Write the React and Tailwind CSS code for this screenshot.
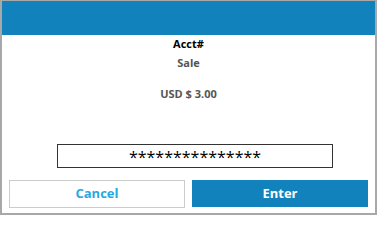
import React from "react";

export default function App() {
    return (
        <div
            className="w-[377px] h-[215px] bg-white border-t border-l-2 border-r-2 border-b-2 border-[#a8a8a8] flex flex-col"
            style={{ fontFamily: '"Open Sans", "Noto Sans", sans-serif' }}
        >
            {/* header bar */}
            <div className="h-[34px] bg-[#1282bd] shrink-0" />

            <div className="flex flex-col items-center font-bold text-[11px] leading-[15px]">
                <div className="mt-[1px] text-black">Acct#</div>
                <div className="mt-[4px] text-[#555555]">Sale</div>
                <div className="mt-[16px] text-[#555555]">USD $ 3.00</div>
            </div>

            {/* masked account input */}
            <div className="mt-[43px] ml-[55px] w-[276px] h-[24px] border border-[#333333] flex items-start justify-center">
                <span className="text-[16px] leading-[24px] text-black">***************</span>
            </div>

            <div className="mt-[12px] px-[7px] flex gap-[7px]">
                <button className="w-[176px] h-[28px] bg-white border border-[#cccccc] text-[#29a8e0] font-bold text-[13px]">
                    Cancel
                </button>
                <button className="w-[176px] h-[27px] bg-[#1282bd] text-white font-bold text-[13px]">
                    Enter
                </button>
            </div>
        </div>
    );
}
